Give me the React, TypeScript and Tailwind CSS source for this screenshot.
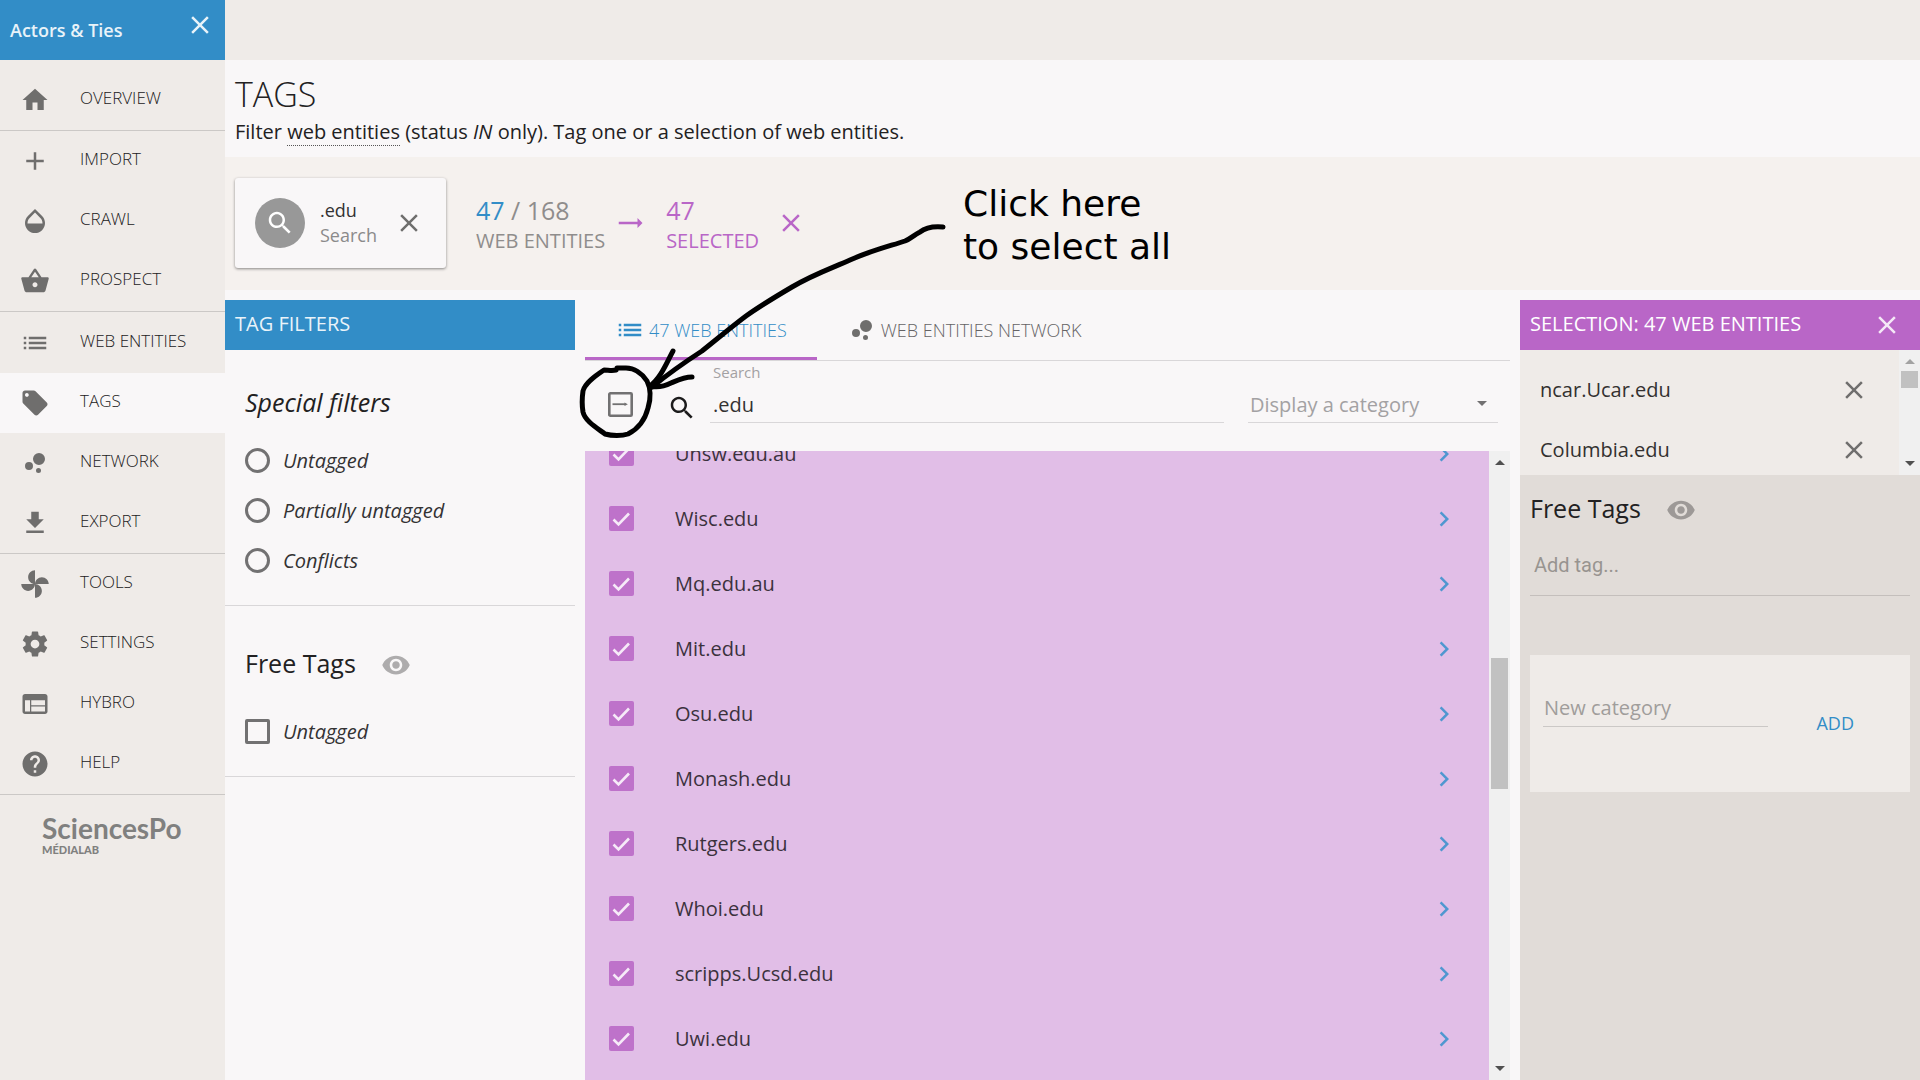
import { useState } from "react";
import type { ReactNode } from "react";
import clsx from "clsx";

const PATHS = {
  home: "M10 20v-6h4v6h5v-8h3L12 3 2 12h3v8z",
  add: "M19 13h-6v6h-2v-6H5v-2h6V5h2v6h6v2z",
  opacity:
    "M17.66 8L12 2.35 6.34 8C4.78 9.56 4 11.64 4 13.64s.78 4.11 2.34 5.67 3.61 2.35 5.66 2.35 4.1-.79 5.66-2.35S20 15.64 20 13.64 19.22 9.56 17.66 8zM6 14c.01-2 .62-3.27 1.76-4.4L12 5.27l4.24 4.38C17.38 10.77 17.99 12 18 14H6z",
  basket:
    "M17.21 9l-4.38-6.56c-.19-.28-.51-.42-.83-.42-.32 0-.64.14-.83.43L6.79 9H2c-.55 0-1 .45-1 1 0 .09.01.18.04.27l2.54 9.27c.23.84 1 1.46 1.92 1.46h13c.92 0 1.69-.62 1.93-1.46l2.54-9.27L23 10c0-.55-.45-1-1-1h-4.79zM9 9l3-4.4L15 9H9zm3 8c-1.1 0-2-.9-2-2s.9-2 2-2 2 .9 2 2-.9 2-2 2z",
  list: "M3 13h2v-2H3v2zm0 4h2v-2H3v2zm0-8h2V7H3v2zm4 4h14v-2H7v2zm0 4h14v-2H7v2zM7 7v2h14V7H7z",
  tag: "M21.41 11.58l-9-9C12.05 2.22 11.55 2 11 2H4c-1.1 0-2 .9-2 2v7c0 .55.22 1.05.59 1.42l9 9c.36.36.86.58 1.41.58.55 0 1.05-.22 1.41-.59l7-7c.37-.36.59-.86.59-1.41 0-.55-.23-1.06-.59-1.42zM5.5 7C4.67 7 4 6.33 4 5.5S4.67 4 5.5 4 7 4.67 7 5.5 6.33 7 5.5 7z",
  bubbles:
    "M4 14.4a3.2 3.2 0 1 0 6.4 0 3.2 3.2 0 1 0-6.4 0zM12.8 18a2 2 0 1 0 4 0 2 2 0 1 0-4 0zM10.4 8.8a4.8 4.8 0 1 0 9.6 0 4.8 4.8 0 1 0-9.6 0z",
  download: "M19 9h-4V3H9v6H5l7 7 7-7zM5 18v2h14v-2H5z",
  toys: "M12 12c0-3 2.5-5.5 5.5-5.5S23 9 23 12H12zm0 0c0 3-2.5 5.5-5.5 5.5S1 15 1 12h11zm0 0c-3 0-5.5-2.5-5.5-5.5S9 1 12 1v11zm0 0c3 0 5.5 2.5 5.5 5.5S15 23 12 23V12z",
  settings:
    "M19.43 12.98c.04-.32.07-.64.07-.98s-.03-.66-.07-.98l2.11-1.65c.19-.15.24-.42.12-.64l-2-3.46c-.12-.22-.39-.3-.61-.22l-2.49 1c-.52-.4-1.08-.73-1.69-.98l-.38-2.65C14.46 2.18 14.25 2 14 2h-4c-.25 0-.46.18-.49.42l-.38 2.65c-.61.25-1.17.59-1.69.98l-2.49-1c-.23-.09-.49 0-.61.22l-2 3.46c-.13.22-.07.49.12.64l2.11 1.65c-.04.32-.07.65-.07.98s.03.66.07.98l-2.11 1.65c-.19.15-.24.42-.12.64l2 3.46c.12.22.39.3.61.22l2.49-1c.52.4 1.08.73 1.69.98l.38 2.65c.03.24.24.42.49.42h4c.25 0 .46-.18.49-.42l.38-2.65c.61-.25 1.17-.59 1.69-.98l2.49 1c.23.09.49 0 .61-.22l2-3.46c.12-.22.07-.49-.12-.64l-2.11-1.65zM12 15.5c-1.93 0-3.5-1.57-3.5-3.5s1.57-3.5 3.5-3.5 3.5 1.57 3.5 3.5-1.57 3.5-3.5 3.5z",
  web: "M4 4h16c1.1 0 2 .9 2 2v12c0 1.1-.9 2-2 2H4c-1.1 0-2-.9-2-2V6c0-1.1.9-2 2-2zm0 5v9h4V9H4zm5 0v4h11V9H9zm0 5v4h11v-4H9z",
  help: "M12 2C6.48 2 2 6.48 2 12s4.48 10 10 10 10-4.48 10-10S17.52 2 12 2zm1 17h-2v-2h2v2zm2.07-7.75l-.9.92C13.45 12.9 13 13.5 13 15h-2v-.5c0-1.1.45-2.1 1.17-2.83l1.24-1.26c.37-.36.59-.86.59-1.41 0-1.1-.9-2-2-2s-2 .9-2 2H8c0-2.21 1.79-4 4-4s4 1.79 4 4c0 .88-.36 1.68-.93 2.25z",
  search:
    "M15.5 14h-.79l-.28-.27C15.41 12.59 16 11.11 16 9.5 16 5.91 13.09 3 9.5 3S3 5.91 3 9.5 5.91 16 9.5 16c1.61 0 3.09-.59 4.23-1.57l.27.28v.79l5 4.99L20.49 19l-4.99-5zm-6 0C7.01 14 5 11.99 5 9.5S7.01 5 9.5 5 14 7.01 14 9.5 11.99 14 9.5 14z",
  close: "M19 6.41L17.59 5 12 10.59 6.41 5 5 6.41 10.59 12 5 17.59 6.41 19 12 13.41 17.59 19 19 17.59 13.41 12z",
  eye: "M12 4.5C7 4.5 2.73 7.61 1 12c1.73 4.39 6 7.5 11 7.5s9.27-3.11 11-7.5c-1.73-4.39-6-7.5-11-7.5zM12 17c-2.76 0-5-2.24-5-5s2.24-5 5-5 5 2.24 5 5-2.24 5-5 5zm0-8c-1.66 0-3 1.34-3 3s1.34 3 3 3 3-1.34 3-3-1.34-3-3-3z",
  chevron: "M10 6L8.59 7.41 13.17 12l-4.58 4.59L10 18l6-6z",
  arrow: "M22 12l-4-4v3H3v2h15v3z",
};

type IconName = keyof typeof PATHS;

function Icon({ name, className = "text-[#6f6e6d]" }: { name: IconName; className?: string }) {
  return (
    <svg viewBox="0 0 24 24" fill="currentColor" aria-hidden="true" className={clsx("size-[30px] shrink-0", className)}>
      <path d={PATHS[name]} fillRule="evenodd" />
    </svg>
  );
}

const NAV: { label: string; icon: IconName }[][] = [
  [{ label: "OVERVIEW", icon: "home" }],
  [
    { label: "IMPORT", icon: "add" },
    { label: "CRAWL", icon: "opacity" },
    { label: "PROSPECT", icon: "basket" },
  ],
  [
    { label: "WEB ENTITIES", icon: "list" },
    { label: "TAGS", icon: "tag" },
    { label: "NETWORK", icon: "bubbles" },
    { label: "EXPORT", icon: "download" },
  ],
  [
    { label: "TOOLS", icon: "toys" },
    { label: "SETTINGS", icon: "settings" },
    { label: "HYBRO", icon: "web" },
    { label: "HELP", icon: "help" },
  ],
];

const ENTITIES = [
  "Unsw.edu.au",
  "Wisc.edu",
  "Mq.edu.au",
  "Mit.edu",
  "Osu.edu",
  "Monash.edu",
  "Rutgers.edu",
  "Whoi.edu",
  "scripps.Ucsd.edu",
  "Uwi.edu",
];

function Sidebar() {
  return (
    <aside className="flex w-[225px] shrink-0 flex-col bg-[#efebe8]">
      <div className="flex h-[60px] shrink-0 items-center justify-between bg-[#328dc7] px-[10px] text-[#e9f3f9]">
        <span className="text-[18px] font-semibold">Actors &amp; Ties</span>
        <button aria-label="Close project" className="-mt-[10px]">
          <Icon name="close" className="text-[#e9f3f9]" />
        </button>
      </div>
      <nav className="pt-[10px]">
        {NAV.map((group, i) => (
          <div key={i} className={clsx("border-b border-[#cbc8c6]", i === 2 && "pt-px")}>
            {group.map((item) => (
              <a
                key={item.label}
                href="#"
                className={clsx("flex h-[60px] items-center gap-[30px] pl-[20px]", item.label === "TAGS" && "bg-[#f9f7f8]")}
              >
                <Icon name={item.icon} />
                <span className="pb-1 text-[17px] font-light">{item.label}</span>
              </a>
            ))}
          </div>
        ))}
      </nav>
      <div className="pt-[17px] pl-[42px] font-[Lato,sans-serif] text-[#80807f]">
        <div className="text-[28px] leading-[32px] font-bold">SciencesPo</div>
        <div className="text-[11px] leading-[11px] font-black">MÉDIALAB</div>
      </div>
    </aside>
  );
}

function FilterBar() {
  return (
    <div className="flex h-[133px] items-center bg-[#f5f1ee] px-[10px] pb-[2px]">
      <div className="flex h-[90px] items-center rounded-[3px] bg-[#f9f7f8] pr-[22px] pl-[20px] shadow-[0_1px_3px_rgba(0,0,0,0.45)]">
        <div className="flex size-[50px] items-center justify-center rounded-full bg-[#989898]">
          <Icon name="search" className="text-white" />
        </div>
        <div className="ml-[15px] text-[18px] leading-[25px] text-[#333233]">
          <div>.edu</div>
          <div className="text-[#8b8a8b]">Search</div>
        </div>
        <button aria-label="Remove filter" className="ml-[17px]">
          <Icon name="close" />
        </button>
      </div>
      <div className="ml-[30px] pt-[5px] text-[#8f8d8c]">
        <div className="text-[25px] leading-[31px]">
          <span className="text-[#328dc7]">47</span> / 168
        </div>
        <div className="text-[20px] leading-[30px]">WEB ENTITIES</div>
      </div>
      <Icon name="arrow" className="mx-[10px] text-[#b966c7]" />
      <div className="ml-[11px] pt-[5px] text-[#b966c7]">
        <div className="text-[25px] leading-[31px]">47</div>
        <div className="text-[20px] leading-[30px]">SELECTED</div>
      </div>
      <button aria-label="Clear selection" className="ml-[17px]">
        <Icon name="close" className="text-[#b966c7]" />
      </button>
    </div>
  );
}

function FreeTagsTitle() {
  return (
    <div className="flex items-center gap-[25px]">
      <h2 className="pb-[2px] text-[25px] leading-[34px]">Free Tags</h2>
      <button aria-label="Toggle free tags" className="pt-[2px]">
        <Icon name="eye" className="text-black/30" />
      </button>
    </div>
  );
}

function TagFilters() {
  return (
    <section className="w-[350px] shrink-0">
      <h2 className="flex h-[50px] items-center bg-[#328dc7] px-[10px] pb-[2px] text-[20px] text-[#e9f3f9]">TAG FILTERS</h2>
      <div className="border-b border-[#d9d7d9] px-[20px] pt-[35px] pb-[20px]">
        <h2 className="mb-[16px] text-[25px] leading-[34px] italic">Special filters</h2>
        {["Untagged", "Partially untagged", "Conflicts"].map((label) => (
          <label key={label} className="flex h-[50px] items-center gap-[13px] text-[20px] text-[#333233] italic">
            <input
              type="radio"
              name="special"
              className="size-[25px] appearance-none rounded-full border-3 border-[#727172]"
            />
            <span className="pt-[2px]">{label}</span>
          </label>
        ))}
      </div>
      <div className="border-b border-[#d9d7d9] px-[20px] pt-[40px] pb-[20px]">
        <FreeTagsTitle />
        <label className="mt-[24px] flex h-[50px] items-center gap-[13px] text-[20px] text-[#333233] italic">
          <input type="checkbox" className="size-[25px] appearance-none rounded-[2px] border-3 border-[#727172]" />
          <span className="pt-[2px]">Untagged</span>
        </label>
      </div>
    </section>
  );
}

function Triangle({ down = false, className }: { down?: boolean; className?: string }) {
  return (
    <svg viewBox="0 0 10 5" fill="currentColor" aria-hidden="true" className={clsx("h-[5px] w-[10px]", className)}>
      <path d={down ? "M0 0h10L5 5z" : "M0 5h10L5 0z"} />
    </svg>
  );
}

function Scrollbar({ atTop = false, children }: { atTop?: boolean; children: ReactNode }) {
  return (
    <div className="flex w-[21px] shrink-0 flex-col items-center bg-[#f0f0f0] py-[9px]">
      <Triangle className={atTop ? "text-[#a3a3a3]" : "text-[#505050]"} />
      <div className="flex flex-1 flex-col items-center">{children}</div>
      <Triangle down className="text-[#505050]" />
    </div>
  );
}

function EntityRow({ name }: { name: string }) {
  const [checked, setChecked] = useState(true);
  return (
    <li className="flex h-[65px] items-center pr-[30px] pl-[24px]">
      <label className="flex flex-1 items-center text-[20px] text-[#3b323d]">
        <span className="mr-[41px] grid">
          <input
            type="checkbox"
            checked={checked}
            onChange={() => setChecked(!checked)}
            className="col-start-1 row-start-1 size-[25px] appearance-none rounded-[2px] bg-[#be72ca]"
          />
          <svg
            viewBox="0 0 25 25"
            fill="none"
            stroke="#f6eaf8"
            strokeWidth="2.6"
            aria-hidden="true"
            className="pointer-events-none col-start-1 row-start-1 size-[25px]"
          >
            {checked && <path d="M4.5 13.5l5 5L20 7.5" />}
          </svg>
        </span>
        {name}
      </label>
      <button aria-label={`Open ${name}`}>
        <Icon name="chevron" className="text-[#4f97d0]" />
      </button>
    </li>
  );
}

function Entities() {
  const [query, setQuery] = useState(".edu");
  return (
    <section className="flex min-w-0 flex-1 flex-col">
      <div className="flex h-[61px] shrink-0 border-b border-[#d9d7d9] text-[18px] font-light">
        <button className="flex items-center gap-[4px] border-b-3 border-[#b966c7] px-[30px] pt-[3px] text-[#328dc7]">
          <Icon name="list" className="text-[#328dc7]" />
          47 WEB ENTITIES
        </button>
        <button className="flex items-center gap-[4px] border-b-3 border-transparent px-[30px] pt-[3px] text-[#656365]">
          <Icon name="bubbles" />
          WEB ENTITIES NETWORK
        </button>
      </div>
      <div className="flex h-[90px] shrink-0 items-start pr-[12px] pl-[23px]">
        <button aria-label="Select all" className="mt-[31px]">
          <svg viewBox="0 0 25 25" fill="none" stroke="#727172" className="size-[25px]">
            <rect x="1.3" y="1.3" width="22.4" height="22.4" rx="1" strokeWidth="2.6" />
            <path d="M4.5 12.2h13" strokeWidth="1.8" />
            <path d="M16.5 10.4l3.4 1.8-3.4 1.8z" fill="#727172" stroke="none" />
          </svg>
        </button>
        <span className="mt-[32px] ml-[34px]">
          <Icon name="search" className="text-[#1c1b1c]" />
        </span>
        <div className="ml-[13px] flex flex-1 flex-col border-b border-[#d9d7d9]">
          <label htmlFor="search" className="pl-[3px] text-[15px] leading-[23px] text-[#a3a1a3]">
            Search
          </label>
          <input
            id="search"
            value={query}
            onChange={(e) => setQuery(e.target.value)}
            className="h-[38px] bg-transparent px-[3px] pt-[2px] text-[20px] text-[#333233] outline-none"
          />
        </div>
        <div className="mt-[23px] ml-[24px] flex w-[250px] items-center border-b border-[#d9d7d9] pr-[11px]">
          <select
            aria-label="Display a category"
            className="h-[38px] flex-1 appearance-none bg-transparent pt-[3px] pl-[2px] text-[20px] text-[#a3a1a3] outline-none"
          >
            <option>Display a category</option>
          </select>
          <Triangle down className="text-[#727172]" />
        </div>
      </div>
      <div className="flex min-h-0 flex-1">
        <div className="min-w-0 flex-1 overflow-hidden bg-[#e1bee7]">
          <ul className="-mt-[30px]">
            {ENTITIES.map((name) => (
              <EntityRow key={name} name={name} />
            ))}
          </ul>
        </div>
        <Scrollbar>
          <div className="mt-[193px] h-[131px] w-[17px] bg-[#c1c1c1]" />
        </Scrollbar>
      </div>
    </section>
  );
}

function Selection() {
  return (
    <section className="flex w-[400px] shrink-0 flex-col bg-[#e1dcd8]">
      <div className="flex h-[50px] shrink-0 items-center justify-between bg-[#b966c7] pr-[18px] pl-[10px] text-white">
        <h2 className="pb-[2px] text-[20px]">SELECTION: 47 WEB ENTITIES</h2>
        <button aria-label="Close selection">
          <Icon name="close" className="text-white/85" />
        </button>
      </div>
      <div className="flex h-[125px] shrink-0 bg-[#efebe8]">
        <ul className="flex-1 overflow-hidden pt-[10px] pr-[30px] pl-[20px] text-[20px] text-[#333130]">
          {["ncar.Ucar.edu", "Columbia.edu"].map((name) => (
            <li key={name} className="flex h-[60px] items-center justify-between">
              {name}
              <button aria-label={`Remove ${name}`}>
                <Icon name="close" />
              </button>
            </li>
          ))}
        </ul>
        <Scrollbar atTop>
          <div className="mt-[7px] h-[17px] w-[17px] bg-[#c1c1c1]" />
        </Scrollbar>
      </div>
      <div className="px-[10px] pt-[16px]">
        <FreeTagsTitle />
        <input
          aria-label="Add tag"
          placeholder="Add tag..."
          className="mt-[8px] h-[61px] w-full border-b border-[#c4bfbc] bg-transparent px-[4px] font-[Roboto,sans-serif] text-[20px] outline-none placeholder:text-[#989490]"
        />
        <div className="mt-[59px] flex h-[137px] items-start bg-[#efebe8] pt-[34px] pr-[56px] pl-[13px]">
          <input
            aria-label="New category"
            placeholder="New category"
            className="h-[38px] w-[225px] border-b border-[#cbc8c6] bg-transparent px-px text-[20px] outline-none placeholder:text-[#a09d9b]"
          />
          <button className="mt-[21px] ml-auto text-[18px] text-[#328dc7]">ADD</button>
        </div>
      </div>
    </section>
  );
}

// Hand-drawn pointer to the select-all box
function Annotation() {
  return (
    <div className="pointer-events-none absolute top-0 left-0">
      <svg width="960" height="450" viewBox="0 0 960 450" fill="none" stroke="#000" strokeWidth="5" strokeLinecap="round" strokeLinejoin="round">
        <path d="M943 227C932 226 925 228 920 232C914 235 910 239 905 241C890 246 870 251 850 260C832 268 812 275 792 287C775 297 760 306 746 316C730 328 716 340 702 351C685 362 668 374 652 387" />
        <path d="M673 351C667 362 661 378 650 386C658 388 665 386 671 383C678 380 684 377 692 377" />
        <path d="M616 370C612 371 608 370 604 370C595 376 585 383 583 391C582 398 582 406 583 412C585 421 597 428 605 434C612 436 622 436 628 434C638 429 645 420 648 408C651 398 651 389 647 381C642 373 634 368 626 368L617 368" />
      </svg>
      <p className="absolute top-[182px] left-[963px] font-['DejaVu_Sans',sans-serif] text-[36px] leading-[43px] whitespace-nowrap text-black">
        Click here
        <br />
        to select all
      </p>
    </div>
  );
}

export default function App() {
  return (
    <div className="relative flex h-screen overflow-hidden bg-[#f9f7f8] font-['Open_Sans',sans-serif] text-[#222122]">
      <Sidebar />
      <main className="flex min-w-0 flex-1 flex-col">
        <div className="h-[60px] shrink-0 bg-[#efebe8]" />
        <header className="h-[97px] shrink-0 px-[10px] pt-[12px]">
          <h1 className="text-[34px] leading-[44px] font-light">TAGS</h1>
          <p className="text-[20px] leading-[32px]">
            Filter{" "}
            <a href="#" className="border-b border-dotted border-[#555]">
              web entities
            </a>{" "}
            (status <em>IN</em> only). Tag one or a selection of web entities.
          </p>
        </header>
        <FilterBar />
        <div className="flex min-h-0 flex-1 gap-[10px] pt-[10px]">
          <TagFilters />
          <Entities />
          <Selection />
        </div>
      </main>
      <Annotation />
    </div>
  );
}
